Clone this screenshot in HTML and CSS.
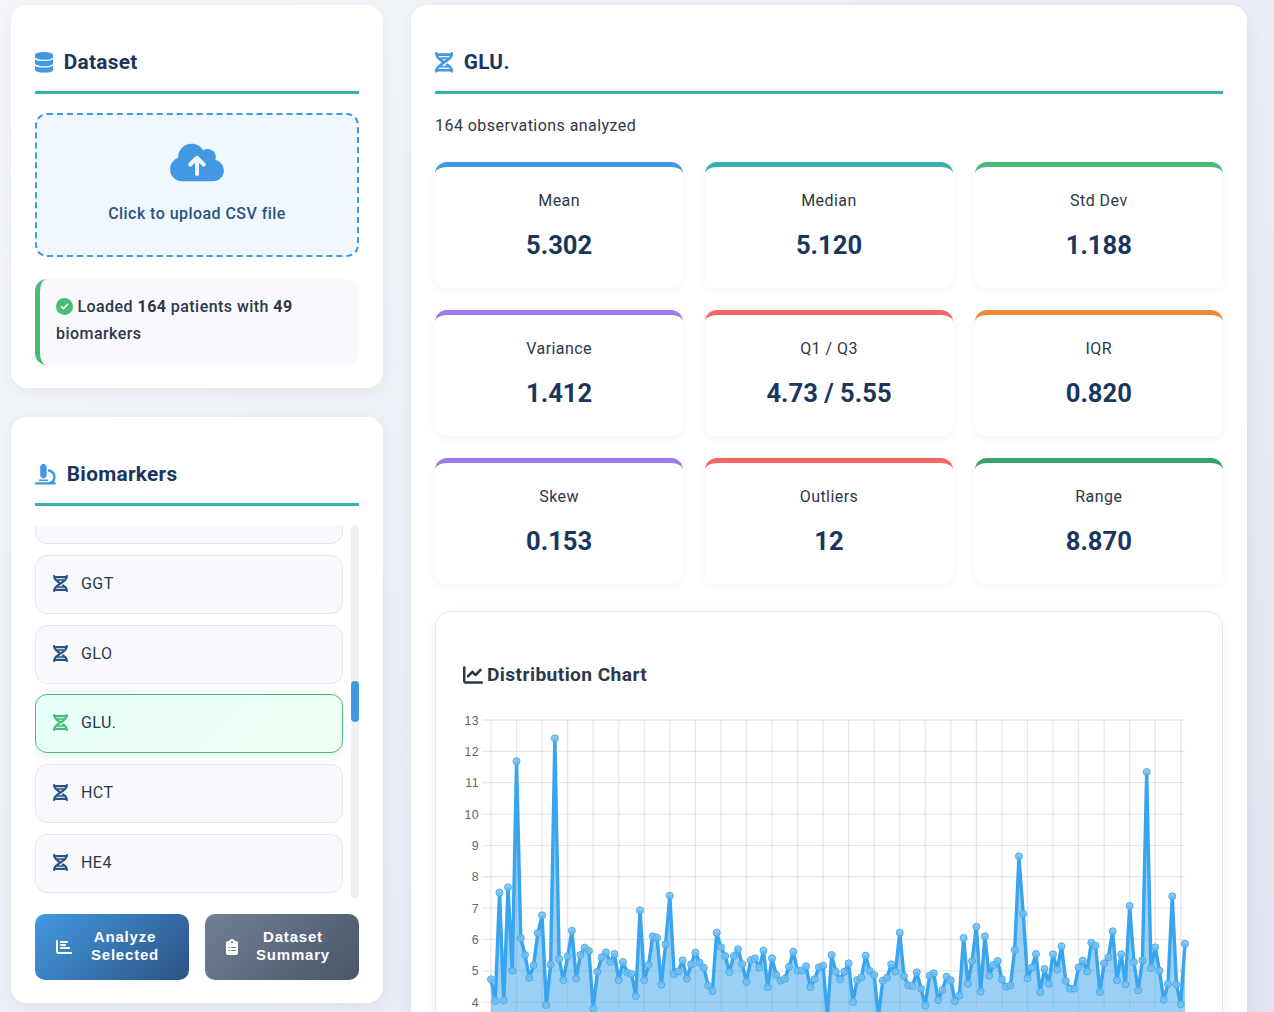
FILE: index.html
```html
<!DOCTYPE html>
<html lang="en">
<head>
<meta charset="utf-8">
<title>Biomarker Explorer</title>
<link rel="stylesheet" href="styles.css">
</head>
<body>
<svg class="sprite" aria-hidden="true">
  <symbol id="i-database" viewBox="0 0 448 512"><path d="M448 73.143v45.714C448 159.143 347.667 192 224 192S0 159.143 0 118.857V73.143C0 32.857 100.333 0 224 0s224 32.857 224 73.143zM448 176v102.857C448 319.143 347.667 352 224 352S0 319.143 0 278.857V176c48.125 33.143 136.208 48.572 224 48.572S399.874 209.143 448 176zm0 160v102.857C448 479.143 347.667 512 224 512S0 479.143 0 438.857V336c48.125 33.143 136.208 48.572 224 48.572S399.874 369.143 448 336z"/></symbol>
  <symbol id="i-cloud" viewBox="0 0 640 512"><path d="M144 480C64.5 480 0 415.5 0 336c0-62.8 40.2-116.2 96.2-135.9c-.1-2.7-.2-5.4-.2-8.1c0-88.4 71.6-160 160-160c59.3 0 111 32.2 138.7 80.2C409.9 102 428.3 96 448 96c53 0 96 43 96 96c0 12.2-2.3 23.8-6.4 34.6C596 238.4 640 290.1 640 352c0 70.7-57.3 128-128 128H144zm79-217c-9.4 9.4-9.4 24.6 0 33.9s24.6 9.4 33.9 0l39-39V392c0 13.3 10.7 24 24 24s24-10.7 24-24V257.9l39 39c9.4 9.4 24.6 9.4 33.9 0s9.4-24.6 0-33.9l-80-80c-9.4-9.4-24.6-9.4-33.9 0l-80 80z"/></symbol>
  <symbol id="i-check" viewBox="0 0 512 512"><path d="M256 512A256 256 0 1 0 256 0a256 256 0 1 0 0 512zM369 209L241 337c-9.4 9.4-24.6 9.4-33.9 0l-64-64c-9.4-9.4-9.4-24.6 0-33.9s24.6-9.4 33.9 0l47 47L335 175c9.4-9.4 24.6-9.4 33.9 0s9.4 24.6 0 33.9z"/></symbol>
  <symbol id="i-microscope" viewBox="0 0 512 512"><path d="M160 32c0-17.7 14.3-32 32-32h32c17.7 0 32 14.3 32 32c17.7 0 32 14.3 32 32V288c0 17.7-14.3 32-32 32c0 17.7-14.3 32-32 32H192c-17.7 0-32-14.3-32-32c-17.7 0-32-14.3-32-32V64c0-17.7 14.3-32 32-32zM32 448H320c70.7 0 128-57.3 128-128s-57.3-128-128-128V128c106 0 192 86 192 192c0 49.2-18.5 94-48.9 128H480c17.7 0 32 14.3 32 32s-14.3 32-32 32H320 32c-17.7 0-32-14.3-32-32s14.3-32 32-32zm80-64H304c8.8 0 16 7.2 16 16s-7.2 16-16 16H112c-8.8 0-16-7.2-16-16s7.2-16 16-16z"/></symbol>
  <symbol id="i-dna" viewBox="0 0 448 512"><path d="M416 0c17.7 0 32 14.3 32 32c0 59.8-30.3 107.5-69.4 146.6c-28 28-62.5 53.5-97.3 77.4l-2.5 1.7c-11.9 8.1-23.8 16.1-35.5 23.9l0 0 0 0 0 0-1.6 1c-6 4-11.9 7.9-17.8 11.9c-20.9 14-40.8 27.7-59.3 41.5H283.3c-9.8-7.4-20.1-14.7-30.7-22.1l7-4.7 3-2c15.1-10.1 30.9-20.6 46.7-31.6c25 18.1 48.9 37.3 69.4 57.7C417.7 372.5 448 420.2 448 480c0 17.7-14.3 32-32 32s-32-14.3-32-32H64c0 17.7-14.3 32-32 32s-32-14.3-32-32c0-59.8 30.3-107.5 69.4-146.6c28-28 62.5-53.5 97.3-77.4c-34.8-23.9-69.3-49.3-97.3-77.4C30.3 139.5 0 91.8 0 32C0 14.3 14.3 0 32 0S64 14.3 64 32H384c0-17.7 14.3-32 32-32zM338.6 384H109.4c-10.1 10.6-18.6 21.3-25.5 32H364.1c-6.8-10.7-15.3-21.4-25.5-32zM109.4 128H338.6c10.1-10.7 18.6-21.3 25.5-32H83.9c6.9 10.7 15.3 21.3 25.5 32zm55.4 48c18.4 13.8 38.4 27.5 59.3 41.5c20.9-14 40.8-27.7 59.3-41.5H164.7z"/></symbol>
  <symbol id="i-bars" viewBox="0 0 512 512"><path d="M32 32c17.7 0 32 14.3 32 32V400c0 8.8 7.2 16 16 16H480c17.7 0 32 14.3 32 32s-14.3 32-32 32H80c-44.2 0-80-35.8-80-80V64C0 46.3 14.3 32 32 32zm96 64c0-17.7 14.3-32 32-32l192 0c17.7 0 32 14.3 32 32s-14.3 32-32 32l-192 0c-17.7 0-32-14.3-32-32zm32 64l128 0c17.7 0 32 14.3 32 32s-14.3 32-32 32l-128 0c-17.7 0-32-14.3-32-32s14.3-32 32-32zm0 96H416c17.7 0 32 14.3 32 32s-14.3 32-32 32H160c-17.7 0-32-14.3-32-32s14.3-32 32-32z"/></symbol>
  <symbol id="i-clipboard" viewBox="0 0 384 512"><path d="M192 0c-41.8 0-77.4 26.7-90.5 64H64C28.7 64 0 92.7 0 128V448c0 35.3 28.7 64 64 64H320c35.3 0 64-28.7 64-64V128c0-35.3-28.7-64-64-64H282.5C269.4 26.7 233.8 0 192 0zm0 64a32 32 0 1 1 0 64 32 32 0 1 1 0-64zM72 272a24 24 0 1 1 48 0 24 24 0 1 1 -48 0zm104-16H304c8.8 0 16 7.2 16 16s-7.2 16-16 16H176c-8.8 0-16-7.2-16-16s7.2-16 16-16zM72 368a24 24 0 1 1 48 0 24 24 0 1 1 -48 0zm88 0c0-8.8 7.2-16 16-16H304c8.8 0 16 7.2 16 16s-7.2 16-16 16H176c-8.8 0-16-7.2-16-16z"/></symbol>
  <symbol id="i-line" viewBox="0 0 512 512"><path d="M64 64c0-17.7-14.3-32-32-32S0 46.3 0 64V400c0 44.2 35.8 80 80 80H480c17.7 0 32-14.3 32-32s-14.3-32-32-32H80c-8.8 0-16-7.2-16-16V64zm406.6 86.6c12.5-12.5 12.5-32.8 0-45.3s-32.8-12.5-45.3 0L320 210.7l-57.4-57.4c-12.5-12.5-32.8-12.5-45.3 0l-112 112c-12.5 12.5-12.5 32.8 0 45.3s32.8 12.5 45.3 0L240 221.3l57.4 57.4c12.5 12.5 32.8 12.5 45.3 0l128-128z"/></symbol>
</svg>

<div class="layout">
  <aside class="sidebar">
    <section class="panel panel-dataset">
      <h2 class="panel-title"><svg class="icon title-icon"><use href="#i-database"/></svg>Dataset</h2>
      <div class="dropzone">
        <svg class="icon cloud-icon"><use href="#i-cloud"/></svg>
        <p class="drop-text">Click to upload CSV file</p>
      </div>
      <div class="status">
        <svg class="icon status-icon"><use href="#i-check"/></svg>
        Loaded <strong>164</strong> patients with <strong>49</strong> biomarkers
      </div>
    </section>

    <section class="panel panel-markers">
      <h2 class="panel-title"><svg class="icon title-icon"><use href="#i-microscope"/></svg>Biomarkers</h2>
      <div class="marker-scroll">
        <div class="marker-viewport">
          <ul class="marker-list">
            <li class="marker"></li>
            <li class="marker"><svg class="icon marker-icon"><use href="#i-dna"/></svg><span>GGT</span></li>
            <li class="marker"><svg class="icon marker-icon"><use href="#i-dna"/></svg><span>GLO</span></li>
            <li class="marker marker-active"><svg class="icon marker-icon"><use href="#i-dna"/></svg><span>GLU.</span></li>
            <li class="marker"><svg class="icon marker-icon"><use href="#i-dna"/></svg><span>HCT</span></li>
            <li class="marker"><svg class="icon marker-icon"><use href="#i-dna"/></svg><span>HE4</span></li>
          </ul>
        </div>
        <div class="scroll-track"><div class="scroll-thumb"></div></div>
      </div>
      <div class="actions">
        <button class="btn btn-primary" type="button"><svg class="icon btn-icon"><use href="#i-bars"/></svg><span>Analyze Selected</span></button>
        <button class="btn btn-muted" type="button"><svg class="icon btn-icon"><use href="#i-clipboard"/></svg><span>Dataset Summary</span></button>
      </div>
    </section>
  </aside>

  <main class="panel panel-main">
    <h2 class="panel-title"><svg class="icon title-icon"><use href="#i-dna"/></svg>GLU.</h2>
    <p class="observations">164 observations analyzed</p>
    <div class="stats">
      <div class="stat c-blue"><div class="stat-label">Mean</div><div class="stat-value">5.302</div></div>
      <div class="stat c-teal"><div class="stat-label">Median</div><div class="stat-value">5.120</div></div>
      <div class="stat c-green"><div class="stat-label">Std Dev</div><div class="stat-value">1.188</div></div>
      <div class="stat c-purple"><div class="stat-label">Variance</div><div class="stat-value">1.412</div></div>
      <div class="stat c-red"><div class="stat-label">Q1 / Q3</div><div class="stat-value">4.73 / 5.55</div></div>
      <div class="stat c-orange"><div class="stat-label">IQR</div><div class="stat-value">0.820</div></div>
      <div class="stat c-purple"><div class="stat-label">Skew</div><div class="stat-value">0.153</div></div>
      <div class="stat c-red"><div class="stat-label">Outliers</div><div class="stat-value">12</div></div>
      <div class="stat c-dgreen"><div class="stat-label">Range</div><div class="stat-value">8.870</div></div>
    </div>
    <section class="chart-card">
      <h3 class="chart-title"><svg class="icon chart-icon"><use href="#i-line"/></svg>Distribution Chart</h3>
      <svg id="chart" class="chart" width="732" height="302"></svg>
    </section>
  </main>
</div>
<script src="chart.js"></script>
</body>
</html>
```
FILE: styles.css
```css
* { box-sizing: border-box; }

html, body {
  margin: 0;
  height: 100%;
  overflow: hidden;
}

body {
  background: linear-gradient(135deg, #f5f7fa 0%, #e0e5ef 100%);
  font-family: Roboto, "Liberation Sans", sans-serif;
  font-size: 16px;
  line-height: 1.7;
  letter-spacing: 0.45px;
  color: #2d3748;
}

.sprite { display: none; }

.icon { display: block; fill: currentColor; flex: none; }

.layout {
  display: grid;
  grid-template-columns: 372px 836px;
  column-gap: 28px;
  padding: 5px 0 0 11px;
  height: 100%;
  align-items: start;
}

.sidebar {
  display: flex;
  flex-direction: column;
  gap: 29px;
}

.panel {
  background: #fff;
  border-radius: 16px;
  padding: 24px;
  box-shadow: 0 4px 20px rgba(26, 54, 93, 0.06);
}

.panel-dataset { height: 383px; }
.panel-markers { height: 586px; }
.panel-main { height: 1100px; }

.panel-title {
  display: flex;
  align-items: center;
  gap: 10.5px;
  margin: 16px 0 19px;
  padding-bottom: 11px;
  border-bottom: 3px solid #38b2ac;
  font-size: 20.8px;
  font-weight: 700;
  color: #1a365d;
  line-height: 35.4px;
  height: 49.4px;
  letter-spacing: 0.3px;
}

.title-icon { height: 20.8px; width: auto; color: #4299e1; aspect-ratio: 7 / 8; }
.panel-markers .title-icon { aspect-ratio: 1; margin-right: 0.5px; }

.dropzone {
  height: 144px;
  padding-top: 26px;
  border: 2px dashed #4299e1;
  border-radius: 12px;
  background: #f0f8ff;
  text-align: center;
}

.cloud-icon { width: 54px; height: 43px; margin: 0 auto; color: #4299e1; }

.drop-text {
  margin: 16px 0 0;
  font-weight: 500;
  color: #2c5282;
}

.status {
  margin-top: 22px;
  padding: 14px 16px;
  height: 86px;
  border-left: 5px solid #48bb78;
  border-radius: 12px;
  background: #f8f9fc;
  font-weight: 500;
  line-height: 27px;
  color: #2d3748;
}

.status strong { font-weight: 700; }

.status-icon {
  display: inline-block;
  width: 17px;
  height: 17px;
  color: #48bb78;
  vertical-align: -2.5px;
}

.marker-scroll {
  display: flex;
  gap: 8px;
  height: 373px;
}

.marker-viewport {
  flex: 1;
  min-width: 0;
  overflow: hidden;
}

.marker-list {
  list-style: none;
  margin: -40px 0 0;
  padding: 0;
}

.marker {
  display: flex;
  align-items: center;
  gap: 13px;
  height: 59px;
  margin-bottom: 10.7px;
  padding: 0 17px 2px;
  border: 1px solid #e2e8f0;
  border-radius: 12px;
  background: #f8f9fc;
  color: #2d3748;
}

.marker-icon { width: 15px; height: 17px; color: #2c5282; }

.marker-active {
  border-color: #48bb78;
  background: linear-gradient(135deg, #e6fffa, #f0fff4);
  box-shadow: 0 4px 12px rgba(72, 187, 120, 0.15);
}

.marker-active .marker-icon { color: #48bb78; }

.scroll-track {
  position: relative;
  flex: none;
  width: 8px;
  border-radius: 4px;
  background: #f1f1f1;
}

.scroll-thumb {
  position: absolute;
  top: 156px;
  left: 0;
  width: 8px;
  height: 41px;
  border-radius: 4px;
  background: #4299e1;
}

.actions {
  display: grid;
  grid-template-columns: 154px 154px;
  column-gap: 16px;
  margin-top: 16px;
}

.btn {
  display: flex;
  align-items: center;
  gap: 10px;
  height: 66px;
  padding: 0 21px;
  border: 0;
  border-radius: 10px;
  color: #fff;
  font-family: "Liberation Sans", Arial, sans-serif;
  font-size: 15px;
  font-weight: 700;
  letter-spacing: 0.8px;
  line-height: 18px;
  text-align: center;
}

.btn span { flex: 1; margin-bottom: 3px; }

.btn-primary { background: linear-gradient(135deg, #4299e1, #2c5282); }
.btn-muted { background: linear-gradient(135deg, #718096, #4a5568); }

.btn-icon { height: 16px; width: 16px; }
.btn-muted .btn-icon { width: 12px; }

.observations {
  margin: -1px 0 23px;
  line-height: 27px;
  color: #2d3748;
}

.stats {
  display: grid;
  grid-template-columns: repeat(3, 1fr);
  column-gap: 21.6px;
  row-gap: 21.9px;
}

.stat {
  height: 126.1px;
  padding-top: 20px;
  border-top: 5px solid #4299e1;
  border-radius: 12px;
  background: #fff;
  box-shadow: 0 2px 10px rgba(26, 54, 93, 0.06);
  text-align: center;
}

.c-blue { border-top-color: #4299e1; }
.c-teal { border-top-color: #38b2ac; }
.c-green { border-top-color: #48bb78; }
.c-purple { border-top-color: #9f7aea; }
.c-red { border-top-color: #f56565; }
.c-orange { border-top-color: #ed8936; }
.c-dgreen { border-top-color: #38a169; }

.stat-label { color: #2d3748; }

.stat-value {
  margin-top: 8px;
  font-size: 25.6px;
  font-weight: 700;
  line-height: 45px;
  letter-spacing: 0;
  color: #1a365d;
}

.chart-card {
  margin-top: 27px;
  padding: 44px 27px 100px;
  border: 1px solid #e2e8f0;
  border-radius: 16px;
  background: #fff;
  box-shadow: 0 4px 16px rgba(26, 54, 93, 0.05);
}

.chart-title {
  display: flex;
  align-items: center;
  gap: 4px;
  margin: 0 0 17px;
  font-size: 19.2px;
  font-weight: 700;
  line-height: 37px;
  letter-spacing: 0.4px;
  color: #2d3748;
}

.chart-icon { width: 20px; height: 20px; }

.chart { display: block; overflow: hidden; }
```
FILE: chart.js
```js
// Screen-space y samples of the series, one array per segment
var A = [1018,1083,758,1081,742,992,364,894,945,1013,976,879,826,1095,974,295,957,1020,949,872,1016,945,923,933,1106,995,952,937,966,942,1020,966,998,1002,1068,811,1020,975,889,893,1034,913,767,1002,994,961,1016,973,938,968,983,1037,1053,878];
var B = [742,768,816,768,748,792,846,780,775,803,752,862,775,825,842,836,800,755,812,812,799,861,838,802,797,950,765,815,838,815,790,906,840,832,767,813,825,950,842,833,793,815,698,828,856,858,817,866,916,827,820,900,870,830,841,903,887,714,851,783,680,875,709,827,795,783];
var C = [838,860,856,750,469,641,835,803,762,876,807,851,763,809,739,843,866,866,802,782,814,728,737,876,790,772,694,841,763,853,618,787,871,781,216,804,742,812,899,852,589,854,913,731];

var ys = A.map(function (z) { return 640 + z / 3; })
  .concat(B.map(function (z) { return 700 + z / 3; }))
  .concat(C.map(function (z) { return 700 + z / 3; }));

var OX = 463, OY = 710;                // top-left of the svg on the page
var LEFT = 491 - OX, RIGHT = 1185 - OX, TOP = 720 - OY, UNIT = 31.35;
var STEP = (RIGHT - LEFT) / (ys.length - 1);
var H = 302, NS = 'http://www.w3.org/2000/svg';
var svg = document.getElementById('chart');

function el(name, attrs, text) {
  var n = document.createElementNS(NS, name);
  for (var k in attrs) n.setAttribute(k, attrs[k]);
  if (text !== undefined) n.textContent = text;
  svg.appendChild(n);
  return n;
}

var GRID = 'rgba(0,0,0,0.09)';

for (var v = 13; v >= 4; v--) {
  var y = TOP + (13 - v) * UNIT;
  el('line', { x1: LEFT - 9, x2: RIGHT, y1: y, y2: y, stroke: GRID, 'stroke-width': 1.3 });
  el('text', { x: LEFT - 12, y: y + 4.6, 'text-anchor': 'end', fill: '#666',
    'font-family': '"Liberation Sans", Arial, sans-serif', 'font-size': 12.3 }, String(v));
}
for (var i = 0; i < ys.length; i += 6) {
  var x = LEFT + i * STEP;
  el('line', { x1: x, x2: x, y1: TOP, y2: H, stroke: GRID, 'stroke-width': 1.3 });
}

var pts = ys.map(function (py, i) { return [LEFT + i * STEP, py - OY]; });
var line = pts.map(function (p) { return p[0].toFixed(2) + ',' + p[1].toFixed(2); }).join(' ');

el('polygon', { points: LEFT + ',' + H + ' ' + line + ' ' + RIGHT + ',' + H, fill: 'rgba(54,162,235,0.5)' });
el('polyline', { points: line, fill: 'none', stroke: 'rgb(56,165,238)', 'stroke-width': 3.4, 'stroke-linejoin': 'bevel' });
pts.forEach(function (p) {
  el('circle', { cx: p[0], cy: p[1], r: 3.5, fill: 'rgba(120,190,240,0.85)', stroke: 'rgb(70,172,238)', 'stroke-width': 1 });
});
```
